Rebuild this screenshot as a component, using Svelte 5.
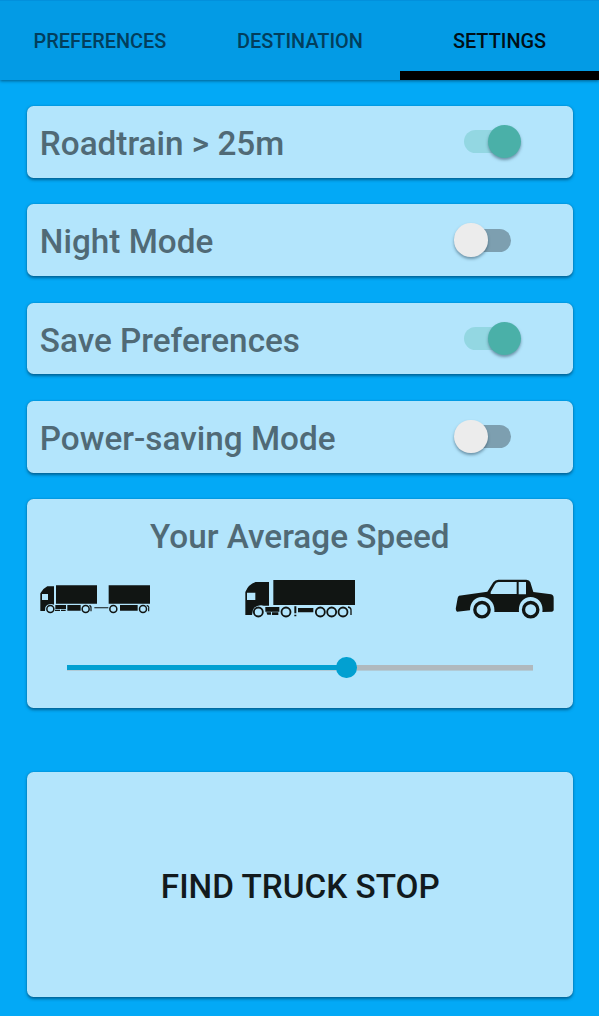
<script>
  let tabs = ['PREFERENCES', 'DESTINATION', 'SETTINGS'];
  let active = $state('SETTINGS');
  let options = $state([
    { label: 'Roadtrain > 25m', on: true },
    { label: 'Night Mode', on: false },
    { label: 'Save Preferences', on: true },
    { label: 'Power-saving Mode', on: false }
  ]);
  let speed = $state(60);
</script>

<div class="screen">
  <nav class="tabs">
    {#each tabs as tab}
      <button class="tab" class:active={tab === active} onclick={() => (active = tab)}><span>{tab}</span></button>
    {/each}
  </nav>

  <main>
    {#each options as option}
      <section class="card option">
        <span class="label">{option.label}</span>
        <button class="switch" class:on={option.on} role="switch" aria-checked={option.on} aria-label={option.label} onclick={() => (option.on = !option.on)}>
          <span class="thumb"></span>
        </button>
      </section>
    {/each}

    <section class="card speed">
      <h2 class="label">Your Average Speed</h2>
      <div class="vehicles">
        <svg width="110" height="55" viewBox="30 0 330 165" fill="#111513">
          <path fill-rule="evenodd" d="M52 49H72V104H72C63 100 51 102 46 112L45 123H31V70Q38 56 52 49ZM36 72V90H54V72Z" />
          <path d="M78 46H201V101H78ZM236 46H360V101H236ZM76 105H108V117H76ZM112 105H152V122H112ZM270 105H323V122H270ZM193 111.5H235V114.5H193ZM75 119H90V123H75ZM93 119H107V123H93Z" />
          <g fill="none" stroke="#111513" stroke-width="4.5">
            <circle cx="61" cy="117" r="10.5" /><circle cx="167" cy="117" r="10.5" />
            <circle cx="250" cy="117" r="10.5" /><circle cx="339" cy="117" r="10.5" />
            <path stroke-width="3.5" d="M178 107Q184 108 183 115V124M350 107Q358 108 356 115V124" />
          </g>
        </svg>
        <svg width="110" height="55" viewBox="30 0 330 165" fill="#111513">
          <path fill-rule="evenodd" d="M62 36H102V107H86C77 103 60 107 54 119L51 135H31V66Q40 43 62 36ZM36 68V90H61V68Z" />
          <path d="M115 30H360V105H115ZM91 111H133V125H91ZM189 114H235V127H189ZM94 127H108V134H97ZM111 127H130V135H111ZM178 109H184V130H178ZM178 134H184V139H178Z" />
          <g fill="none" stroke="#111513" stroke-width="5.5">
            <circle cx="70" cy="126" r="13.5" /><circle cx="153" cy="126" r="13.5" />
            <circle cx="256" cy="126" r="13.5" /><circle cx="290" cy="126" r="13.5" /><circle cx="324" cy="126" r="13.5" />
            <path stroke-width="4" d="M339 111Q349 113 348 122V135" />
          </g>
        </svg>
        <svg class="car" width="100" height="55" viewBox="30 0 300 165" fill="#111513">
          <path fill-rule="evenodd" d="M42 77L127 65L145 37Q151 29 160 29H244Q253 29 256 37L265 66L318 73Q326 75 326 84V120Q326 124 321 125L292 126C296 100 279 81 257 81C234 81 219 101 222 126H148C151 100 133 81 111 81C89 81 75 98 75 121L36 125Q31 121 33 112L38 84Q39 79 42 77ZM137 72H215V36H161Q154 36 150 43L137 66ZM221 36V73H243V36Z" />
          <g fill="none" stroke="#111513" stroke-width="10">
            <circle cx="111" cy="119" r="21.5" /><circle cx="257" cy="119" r="21.5" />
          </g>
        </svg>
      </div>
      <div class="slider">
        <div class="fill" style="width: {speed}%"></div>
        <div class="knob"></div>
      </div>
    </section>

    <button class="card find">FIND TRUCK STOP</button>
  </main>
</div>

<style>
  :global(body) { margin: 0; }
  .screen {
    height: 1016px;
    overflow: hidden;
    background: #03a9f6;
    font-family: Roboto, sans-serif;
    font-weight: 500;
  }
  button { border: 0; padding: 0; font: inherit; }
  .tabs {
    display: grid;
    grid-template-columns: 200px 200px 1fr;
    height: 80px;
    background: #039be5;
    box-shadow: 0 1px 3px rgba(0, 50, 80, 0.65), inset 0 1px #0290dc;
  }
  .tab {
    box-sizing: border-box;
    border-bottom: 9px solid transparent;
    padding-top: 12px;
    background: none;
    color: #023e5c;
    font-size: 19.9px;
  }
  .tab.active { color: #000f17; border-color: #000; }
  main {
    display: flex;
    flex-direction: column;
    gap: 26.6px;
    padding: 26.2px 26px 0 26.6px;
  }
  .card {
    box-sizing: border-box;
    border-radius: 6.5px;
    background: #b3e5fc;
    box-shadow: 0 1.5px 3px rgba(0, 45, 75, 0.55), 0 0 1px rgba(0, 45, 75, 0.3);
  }
  .option {
    display: flex;
    align-items: center;
    justify-content: space-between;
    height: 71.7px;
    padding: 4px 52px 0 13.2px;
  }
  .label { color: #506a76; font-size: 33.3px; line-height: 40px; }
  .switch {
    display: flex;
    align-items: center;
    width: 66.6px;
    height: 34px;
    margin-top: -4.6px;
    background: none;
    position: relative;
  }
  .switch::before {
    content: '';
    position: absolute;
    left: 10px;
    top: 5.5px;
    width: 47px;
    height: 23px;
    border-radius: 12px;
    background: #7d9fb0;
  }
  .switch.on::before { background: #93d7e2; }
  .thumb {
    position: relative;
    width: 33.4px;
    height: 33.4px;
    border-radius: 50%;
    background: #ececec;
    box-shadow: 0 2px 3px rgba(40, 70, 90, 0.5);
  }
  .on .thumb { margin-left: auto; background: #4ab0a8; }
  .speed { height: 208.2px; padding-top: 17.5px; }
  h2 { margin: 0; font-weight: 500; text-align: center; }
  .vehicles { display: flex; gap: 95px; padding: 13px 0 0 13.4px; }
  .vehicles svg { flex: none; }
  .car { margin-left: 5px; }
  .slider {
    display: flex;
    align-items: center;
    height: 20px;
    margin: 32.5px 40px 0;
    background: linear-gradient(#b0b9be, #b0b9be) center / 100% 5.6px no-repeat;
  }
  .fill { height: 5.6px; background: #02a0d1; }
  .knob {
    flex: none;
    width: 20.4px;
    height: 20.4px;
    margin-left: -10.2px;
    border-radius: 50%;
    background: #02a0d1;
  }
  .find {
    height: 224.8px;
    margin-top: 38px;
    padding: 4px 0 0 1px;
    color: #121a1d;
    font-size: 33.3px;
  }
</style>
